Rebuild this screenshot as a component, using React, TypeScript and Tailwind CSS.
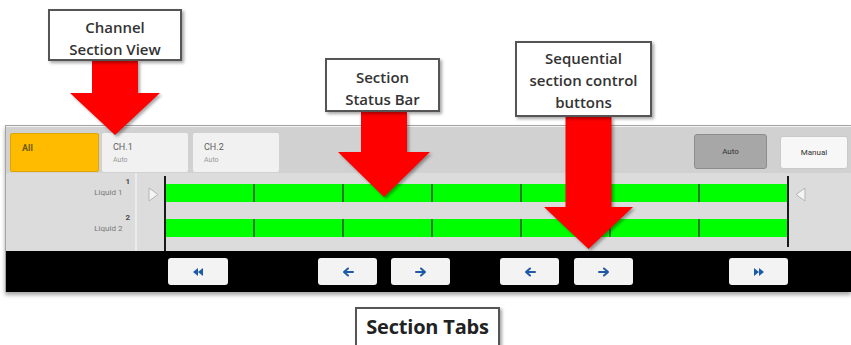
import React from "react";

type Callout = { lines: string[]; box: string };

// Annotation boxes lying over the screenshot
const callouts: Callout[] = [
  { lines: ["Channel", "Section View"], box: "left-[48px] top-[9px] w-[134px] h-[52px] pt-[5px]" },
  { lines: ["Section", "Status Bar"], box: "left-[325px] top-[58px] w-[115px] h-[54px] pt-[5px]" },
  { lines: ["Sequential", "section control", "buttons"], box: "left-[515px] top-[41px] w-[137px] h-[76px] pt-[1px]" },
];

// Red block arrow: shaft from top, head below, tip at bottom centre
function RedArrow({ className, w, h, shaftW, headY }: { className: string; w: number; h: number; shaftW: number; headY: number }) {
  const cx = w / 2;
  const pts = [
    [cx - shaftW / 2, 0],
    [cx + shaftW / 2, 0],
    [cx + shaftW / 2, headY],
    [w, headY],
    [cx, h],
    [0, headY],
    [cx - shaftW / 2, headY],
  ]
    .map((p) => p.join(","))
    .join(" ");
  return (
    <svg className={`absolute ${className} drop-shadow-[2px_2px_1.5px_rgba(0,0,0,0.35)]`} width={w} height={h} viewBox={`0 0 ${w} ${h}`}>
      <polygon points={pts} fill="#ff0000" />
    </svg>
  );
}

function Tab({ title, sub, className }: { title: string; sub?: string; className: string }) {
  return (
    <div className={`flex h-[39px] flex-col rounded-[2px] pl-[11px] pt-[9px] ${className}`}>
      <span className="text-[9px] leading-[11px]">{title}</span>
      {sub && <span className="mt-[3px] text-[7px] leading-[8px] text-[#9a9a9a]">{sub}</span>}
    </div>
  );
}

function Bar() {
  return (
    <div className="flex h-[18px] w-full bg-[#00ff00]">
      {[0, 1, 2, 3, 4, 5, 6].map((i) => (
        <div key={i} className={`flex-1 ${i > 0 ? "border-l-2 border-[#2a7a2a]" : ""}`} />
      ))}
    </div>
  );
}

function Triangle({ left }: { left?: boolean }) {
  return (
    <svg width="11" height="15" viewBox="0 0 11 15">
      <polygon points={left ? "10,1 10,14 1,7.5" : "1,1 1,14 10,7.5"} fill="#f4f4f4" stroke="#b5b5b5" strokeWidth="1" />
    </svg>
  );
}

function NavIcon({ kind }: { kind: "first" | "prev" | "next" | "last" }) {
  const c = "#1f5aa6";
  if (kind === "first" || kind === "last") {
    const d = kind === "first" ? "M6 1 L1 5 L6 9 Z M11 1 L6 5 L11 9 Z" : "M1 1 L6 5 L1 9 Z M6 1 L11 5 L6 9 Z";
    return (
      <svg width="12" height="10" viewBox="0 0 12 10">
        <path d={d} fill={c} />
      </svg>
    );
  }
  const d = kind === "prev" ? "M11 5 H3 M6 1.5 L2 5 L6 8.5" : "M1 5 H9 M6 1.5 L10 5 L6 8.5";
  return (
    <svg width="12" height="10" viewBox="0 0 12 10">
      <path d={d} fill="none" stroke={c} strokeWidth="2" strokeLinecap="round" strokeLinejoin="round" />
    </svg>
  );
}

function NavButton({ kind, className }: { kind: "first" | "prev" | "next" | "last"; className: string }) {
  return (
    <div className={`flex h-[27px] w-[59px] items-center justify-center rounded-[3px] bg-[#f3f3f3] ${className}`}>
      <NavIcon kind={kind} />
    </div>
  );
}

export default function App() {
  return (
    <div className="relative h-[345px] w-[851px] overflow-hidden bg-white font-['Open_Sans',sans-serif]">
      <div className="h-[125px]" />

      {/* Device screen */}
      <div className="ml-[5px] border-l border-t border-[#a4a4a4] bg-[#dadada] font-['Roboto',sans-serif] shadow-[0_3px_4px_rgba(0,0,0,0.35)]">
        {/* Tab row */}
        <div className="flex h-[47px] items-start border-t border-[#f2f2f2] bg-[#d1d1d1] pl-[4px] pt-[6px]">
          <Tab title="All" className="w-[89px] border border-[#e0a600] bg-[#ffbb00] font-bold text-[#6d5b10]" />
          <Tab title="CH.1" sub="Auto" className="ml-[3px] w-[86px] bg-[#f1f1f1] text-[#5f5f5f]" />
          <Tab title="CH.2" sub="Auto" className="ml-[5px] w-[86px] bg-[#f1f1f1] text-[#5f5f5f]" />
          <div className="ml-auto mt-[1px] flex h-[35px] w-[73px] items-center justify-center rounded-[3px] border border-[#8c8c8c] bg-[#a7a7a7] text-[8px] text-[#333]">
            Auto
          </div>
          <div className="ml-[13px] mr-[3px] mt-[3px] flex h-[33px] w-[68px] items-center justify-center rounded-[3px] border border-[#c9c9c9] bg-[#f7f7f7] text-[8px] text-[#333]">
            Manual
          </div>
        </div>

        {/* Section rows */}
        <div className="flex h-[78px] bg-[#dcdcdc]">
          <div className="flex w-[131px] flex-col items-end border-r-2 border-[#ececec] pr-[5px] pt-[4px] text-[#7a7a7a]">
            <div className="flex items-start">
              <span className="mt-[11px] text-[8px] leading-[10px]">Liquid 1</span>
              <span className="ml-[3px] text-[8px] font-bold leading-[10px] text-[#4a4a4a]">1</span>
            </div>
            <div className="mt-[15px] flex items-start">
              <span className="mt-[11px] text-[8px] leading-[10px]">Liquid 2</span>
              <span className="ml-[3px] text-[8px] font-bold leading-[10px] text-[#4a4a4a]">2</span>
            </div>
          </div>
          <div className="w-[27px] pl-[11px] pt-[14px]">
            <Triangle />
          </div>
          <div className="mt-[3px] w-[2px] bg-[#1a1a1a]" />
          <div className="flex w-[621px] flex-col pt-[11px]">
            <Bar />
            <div className="h-[17px]" />
            <Bar />
          </div>
          <div className="mb-[4px] mt-[3px] w-[2px] bg-[#1a1a1a]" />
          <div className="pl-[6px] pt-[14px]">
            <Triangle left />
          </div>
        </div>

        {/* Navigation bar */}
        <div className="flex h-[41px] items-start bg-black pt-[7px]">
          <NavButton kind="first" className="ml-[162px] w-[60px]" />
          <NavButton kind="prev" className="ml-[90px]" />
          <NavButton kind="next" className="ml-[14px]" />
          <NavButton kind="prev" className="ml-[50px] w-[58px]" />
          <NavButton kind="next" className="ml-[15px]" />
          <NavButton kind="last" className="ml-[96px]" />
        </div>
      </div>

      {/* Bottom label */}
      <div className="ml-[355px] mt-[15px] flex h-[50px] w-[145px] justify-center border-2 border-[#555] bg-white pt-[6px] shadow-[2px_2px_3px_rgba(0,0,0,0.35)]">
        <span className="text-[20px] font-bold leading-[24px] tracking-[-0.2px] text-[#222]">Section Tabs</span>
      </div>

      {/* Arrows */}
      <RedArrow className="left-[70px] top-[61px]" w={90} h={74} shaftW={46} headY={32} />
      <RedArrow className="left-[338px] top-[112px]" w={92} h={85} shaftW={46} headY={40} />
      <RedArrow className="left-[544px] top-[117px]" w={89} h={132} shaftW={46} headY={90} />

      {/* Callouts */}
      {callouts.map((c) => (
        <div
          key={c.lines[0]}
          className={`absolute ${c.box} flex flex-col items-center justify-center border-2 border-[#555] bg-white shadow-[2px_2px_3px_rgba(0,0,0,0.35)]`}
        >
          {c.lines.map((l) => (
            <span key={l} className="text-[15px] font-semibold leading-[22px] text-[#333]">
              {l}
            </span>
          ))}
        </div>
      ))}
    </div>
  );
}
